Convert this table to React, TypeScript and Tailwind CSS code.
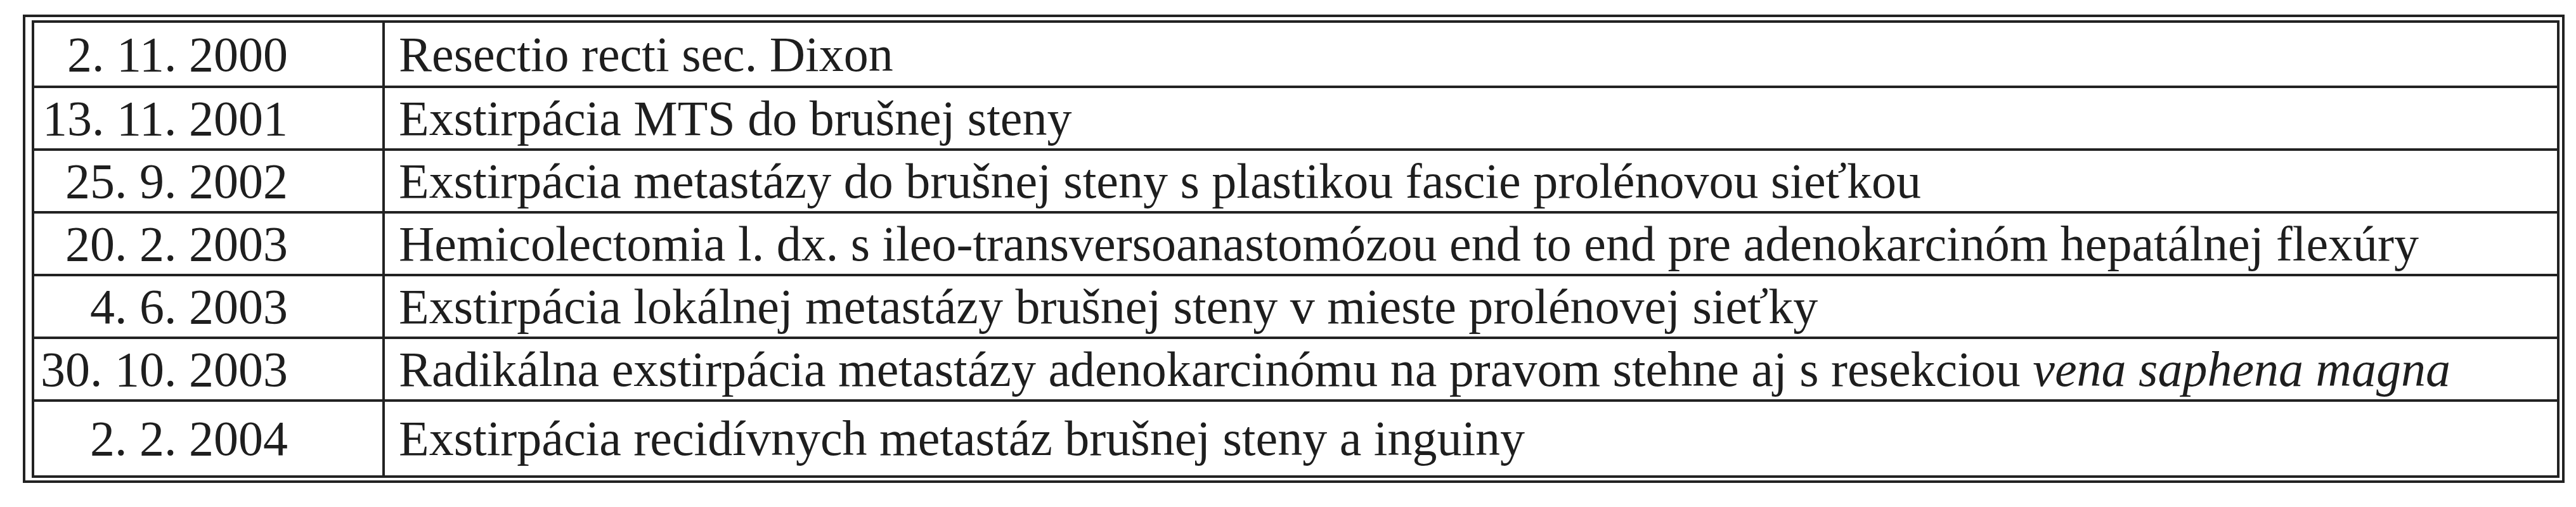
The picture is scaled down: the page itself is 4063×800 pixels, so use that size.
const rows: { date: string; text: React.ReactNode }[] = [
  { date: "2. 11. 2000", text: "Resectio recti sec. Dixon" },
  { date: "13. 11. 2001", text: "Exstirpácia MTS do brušnej steny" },
  { date: "25. 9. 2002", text: "Exstirpácia metastázy do brušnej steny s plastikou fascie prolénovou sieťkou" },
  {
    date: "20. 2. 2003",
    text: "Hemicolectomia l. dx. s ileo-transversoanastomózou end to end pre adenokarcinóm hepatálnej flexúry",
  },
  { date: "4. 6. 2003", text: "Exstirpácia lokálnej metastázy brušnej steny v mieste prolénovej sieťky" },
  {
    date: "30. 10. 2003",
    text: (
      <>
        Radikálna exstirpácia metastázy adenokarcinómu na pravom stehne aj s resekciou <i>vena saphena magna</i>
      </>
    ),
  },
  { date: "2. 2. 2004", text: "Exstirpácia recidívnych metastáz brušnej steny a inguiny" },
]

export default function App() {
  return (
    <div className="min-h-[800px] w-[4063px] bg-white pl-[36px] pt-[23px] font-['Liberation_Serif','Times_New_Roman',serif] text-[#1e1e1e]">
      {/* double frame */}
      <div className="w-[4009px] border-4 border-[#222] pl-[10px] pr-[4px] pt-[5px] pb-[4px]">
        <div className="border-4 border-[#222]">
          {rows.map((row, i) => (
            <div
              key={i}
              className={`flex ${i === rows.length - 1 ? "h-[120px]" : "h-[99px]"} ${i > 0 ? "border-t-4 border-[#222]" : ""}`}
            >
              <div className="flex w-[553px] shrink-0 items-center justify-end border-r-4 border-[#222] pr-[149px] text-[78px] leading-none whitespace-nowrap">
                {row.date}
              </div>
              <div className="flex items-center pl-[22px] text-[78px] leading-none whitespace-nowrap">
                <span>{row.text}</span>
              </div>
            </div>
          ))}
        </div>
      </div>
    </div>
  )
}
